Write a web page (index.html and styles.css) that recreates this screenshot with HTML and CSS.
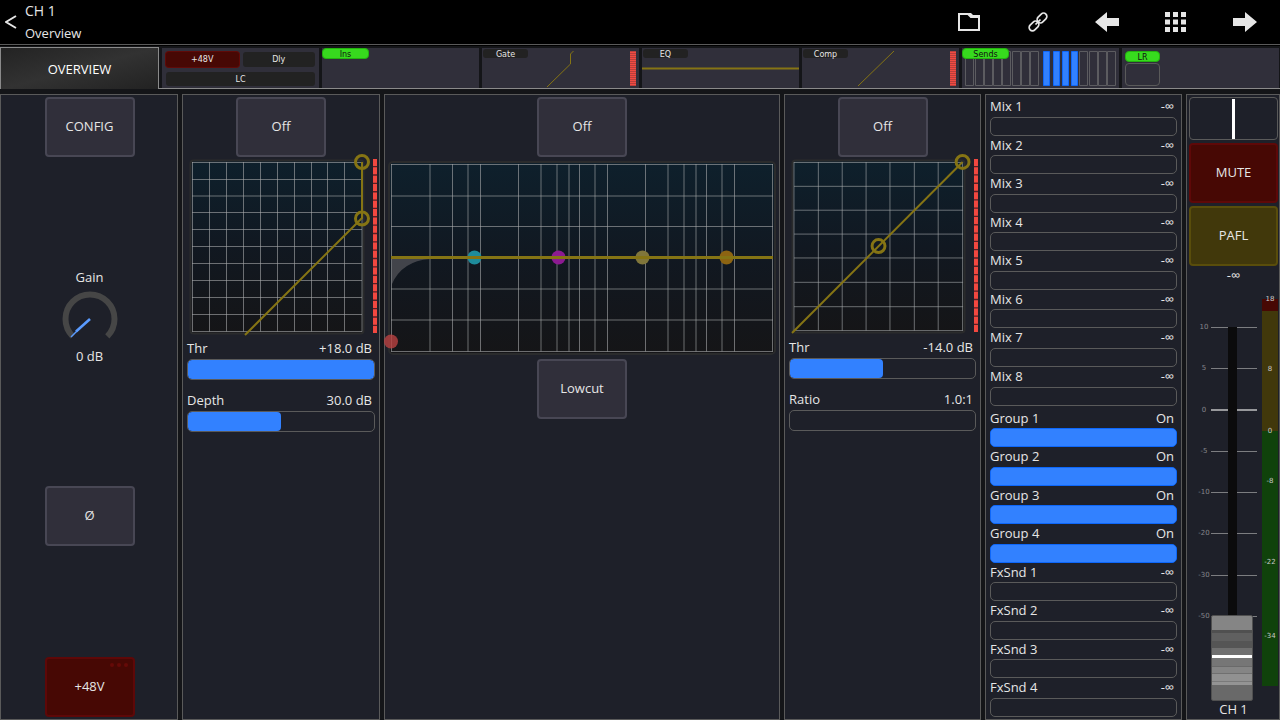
FILE: index.html
```html
<!DOCTYPE html>
<html lang="en">
<head>
	<meta charset="utf-8">
	<meta name="viewport" content="width=device-width, initial-scale=1.0">
	<title>CH 1 Overview</title>
	<link rel="stylesheet" href="styles.css">
</head>
<body>
	<header class="topbar">
		<button class="back" aria-label="Back">
			<svg width="12" height="14" viewBox="0 0 12 14"><path d="M11 1 1 7l10 6" fill="none" stroke="#e6e6e6" stroke-width="2"/></svg>
		</button>
		<h1 class="title">CH 1<small>Overview</small></h1>
		<div class="tools">
			<button aria-label="Library">
				<svg width="24" height="20" viewBox="0 0 24 20"><path d="M2 2h9l3 3h8v13H2z" fill="none" stroke="#e6e6e6" stroke-width="2"/><path d="M11 1h3l2 2h7v3h-9z" fill="#e6e6e6"/></svg>
			</button>
			<button aria-label="Link">
				<svg width="20" height="20" viewBox="0 0 20 20"><g fill="none" stroke="#e6e6e6" stroke-width="1.700"><rect x="8.500" y="2.700" width="11" height="6.600" rx="3.300" transform="rotate(-45 14 6)"/><rect x=".5" y="10.700" width="11" height="6.600" rx="3.300" transform="rotate(-45 6 14)"/><path d="m7.500 12.500 5-5"/></g></svg>
			</button>
			<button aria-label="Previous channel">
				<svg width="24" height="20" viewBox="0 0 24 20"><path d="M0 10 12 0v6h12v8H12v6z" fill="#e6e6e6"/></svg>
			</button>
			<button aria-label="Channels">
				<svg width="22" height="20" viewBox="0 0 22 20"><path d="M0 0h5v5H0zM8 0h5v5H8zM16 0h5v5h-5zM0 7.500h5v5H0zM8 7.500h5v5H8zM16 7.500h5v5h-5zM0 15h5v5H0zM8 15h5v5H8zM16 15h5v5h-5z" fill="#e6e6e6"/></svg>
			</button>
			<button aria-label="Next channel">
				<svg width="24" height="20" viewBox="0 0 24 20"><path d="M24 10 12 0v6H0v8h12v6z" fill="#e6e6e6"/></svg>
			</button>
		</div>
	</header>

	<nav class="tabs">
		<a class="tab current" href="#overview">OVERVIEW</a>
		<a class="tab preamp" href="#preamp">
			<span class="chip red">+48V</span><span class="chip">Dly</span><span class="chip wide">LC</span>
		</a>
		<a class="tab" href="#insert"><span class="tag on">Ins</span></a>
		<a class="tab" href="#gate">
			<span class="tag">Gate</span>
			<svg viewBox="0 0 157 40"><path d="M65 39 88.500 16V6l3-3" fill="none" stroke="#857414"/><path d="M151 3v35" stroke="#f14a42" stroke-width="6"/><path d="M151 3v35" stroke="#b8403c" stroke-width="6" stroke-dasharray="1 1"/></svg>
		</a>
		<a class="tab" href="#eq">
			<span class="tag">EQ</span>
			<svg viewBox="0 0 157 40"><path d="M0 20.500h157" stroke="#857414" stroke-width="2"/></svg>
		</a>
		<a class="tab" href="#comp">
			<span class="tag">Comp</span>
			<svg viewBox="0 0 157 40"><path d="M56 38 92 3" fill="none" stroke="#857414"/><path d="M151 3v35" stroke="#f14a42" stroke-width="6"/><path d="M151 3v35" stroke="#b8403c" stroke-width="6" stroke-dasharray="1 1"/></svg>
		</a>
		<a class="tab" href="#sends">
			<span class="tag on">Sends</span>
			<svg viewBox="0 0 157 40"><path d="M3.500 3.500h8v34h-8zM13.500 3.500h8v34h-8zM22.500 3.500h8v34h-8zM31.500 3.500h8v34h-8zM40.500 3.500h8v34h-8zM50.500 3.500h8v34h-8zM59.500 3.500h8v34h-8zM68.500 3.500h8v34h-8zM117.500 3.500h8v34h-8zM127.500 3.500h8v34h-8zM136.500 3.500h8v34h-8zM145.500 3.500h8v34h-8z" fill="none" stroke="#5c5c60"/><path d="M81.500 3.500h6v34h-6zM91.500 3.500h6v34h-6zM100.500 3.500h6v34h-6zM109.500 3.500h6v34h-6z" fill="#3281ff" stroke="#0d67fa"/></svg>
		</a>
		<a class="tab main-out" href="#lr"><span class="lr">LR</span><span class="lr-box"></span></a>
	</nav>

	<main class="panels">
		<section class="panel preamp-panel">
			<button class="btn">CONFIG</button>
			<div class="gain">
				<span>Gain</span>
				<svg width="56" height="56" viewBox="0 0 56 56" role="img" aria-label="Gain knob"><path d="M10.700 45.300a24.500 24.500 0 1 1 34.600 0" fill="none" stroke="#464646" stroke-width="6"/><path d="M28 28 14 40.500" stroke="#5a9bff" stroke-width="2.600"/><path d="M16 39 9 46" stroke="#5a9bff" stroke-width="1.500"/></svg>
				<span>0 dB</span>
			</div>
			<button class="btn">Ø</button>
			<button class="btn red">+48V<span class="dots"><i></i><i></i><i></i></span></button>
		</section>

		<section class="panel dynamics">
			<button class="btn">Off</button>
			<svg class="graph" viewBox="0 0 188 180">
				<defs>
					<linearGradient id="plot" x1="0" y1="0" x2="0" y2="1"><stop offset="0" stop-color="#0e202c"/><stop offset=".5" stop-color="#111821"/><stop offset="1" stop-color="#151517"/></linearGradient>
				</defs>
				<rect x="3.500" y="3.500" width="173" height="173" rx="3" fill="url(#plot)" stroke="#2a2b2c" stroke-width="2"/>
				<path class="grid" d="M5.500 5v169.500M22.500 5v169.500M39.500 5v169.500M56.500 5v169.500M73.500 5v169.500M90.500 5v169.500M107.500 5v169.500M124.500 5v169.500M140.500 5v169.500M157.500 5v169.500M175 5v169.500M5 5.500h170M5 22.500h170M5 39h170M5 55.500h170M5 72.500h170M5 89.500h170M5 106.500h170M5 123.500h170M5 140.500h170M5 157.500h170M5 174.500h170"/>
				<path class="curve" d="M58 178 175 61V5"/>
				<circle class="handle" cx="175" cy="5" r="6.500"/><circle class="handle" cx="175" cy="61.500" r="6.500"/>
				<path class="leds-off" d="M188 2v174"/><path class="leds" d="M188 2v174"/>
			</svg>
			<div class="param">
				<label for="gate-thr">Thr</label><output for="gate-thr">+18.0 dB</output>
				<input id="gate-thr" type="range" min="-72" max="18" value="18" style="--level: 100%">
			</div>
			<div class="param">
				<label for="gate-depth">Depth</label><output for="gate-depth">30.0 dB</output>
				<input id="gate-depth" type="range" min="0" max="60" value="30" style="--level: 50%">
			</div>
		</section>

		<section class="panel eq">
			<button class="btn">Off</button>
			<svg class="graph" viewBox="0 0 394 202">
				<rect x="4" y="5" width="386" height="192" rx="4" fill="url(#plot)" stroke="#2a2b2c" stroke-width="2"/>
				<path class="grid" d="M6.500 7v187.500M45 7v187.500M67.500 7v187.500M83 7v187.500M95.500 7v187.500M133.500 7v187.500M156 7v187.500M172 7v187.500M184 7v187.500M194.500 7v187.500M210 7v187.500M222.500 7v187.500M260.500 7v187.500M283 7v187.500M299 7v187.500M311 7v187.500M321.500 7v187.500M337 7v187.500M349.500 7v187.500M387.500 7v187.500M6 7.500h382M6 39h382M6 69.500h382M6 132h382M6 163h382M6 194.500h382"/>
				<path d="M7 101v26q10-23 38-25z" fill="#4b4c52" fill-opacity=".85"/>
				<circle cx="89.500" cy="100.500" r="7" fill="#1e8c9c"/>
				<circle cx="173.500" cy="100.500" r="7" fill="#8c1a92"/>
				<circle cx="257.500" cy="100.500" r="7" fill="#80763b"/>
				<circle cx="341.500" cy="100.500" r="7" fill="#8d6412"/>
				<circle cx="6" cy="184.500" r="7" fill="#b94141" fill-opacity=".8"/>
				<path class="curve flat" d="M6 100.500h382"/>
			</svg>
			<button class="btn">Lowcut</button>
		</section>

		<section class="panel dynamics">
			<button class="btn">Off</button>
			<svg class="graph" viewBox="0 0 188 180">
				<rect x="3.500" y="3.500" width="173" height="173" rx="3" fill="url(#plot)" stroke="#2a2b2c" stroke-width="2"/>
				<path class="grid" d="M5 5v169.500M29.500 5v169.500M53.500 5v169.500M77.500 5v169.500M101.500 5v169.500M126 5v169.500M150 5v169.500M174.500 5v169.500M5 5.500h170M5 29.500h170M5 53.500h170M5 77.500h170M5 101.500h170M5 126h170M5 150.500h170M5 174.500h170"/>
				<path class="curve" d="M3 177 174.500 5"/>
				<circle class="handle" cx="174.500" cy="5" r="6.500"/><circle class="handle" cx="90" cy="89.500" r="6.500"/>
				<path class="leds-off" d="M188 2v174"/><path class="leds" d="M188 2v174"/>
			</svg>
			<div class="param">
				<label for="comp-thr">Thr</label><output for="comp-thr">-14.0 dB</output>
				<input id="comp-thr" type="range" min="-46" max="18" value="-14" style="--level: 50%">
			</div>
			<div class="param">
				<label for="comp-ratio">Ratio</label><output for="comp-ratio">1.0:1</output>
				<input id="comp-ratio" type="range" min="1" max="20" value="1" style="--level: 0%">
			</div>
		</section>

		<section class="panel sends">
			<div class="send"><label for="mix1">Mix 1</label><output for="mix1">-∞</output><input id="mix1" type="range" value="0" style="--level: 0%"></div>
			<div class="send"><label for="mix2">Mix 2</label><output for="mix2">-∞</output><input id="mix2" type="range" value="0" style="--level: 0%"></div>
			<div class="send"><label for="mix3">Mix 3</label><output for="mix3">-∞</output><input id="mix3" type="range" value="0" style="--level: 0%"></div>
			<div class="send"><label for="mix4">Mix 4</label><output for="mix4">-∞</output><input id="mix4" type="range" value="0" style="--level: 0%"></div>
			<div class="send"><label for="mix5">Mix 5</label><output for="mix5">-∞</output><input id="mix5" type="range" value="0" style="--level: 0%"></div>
			<div class="send"><label for="mix6">Mix 6</label><output for="mix6">-∞</output><input id="mix6" type="range" value="0" style="--level: 0%"></div>
			<div class="send"><label for="mix7">Mix 7</label><output for="mix7">-∞</output><input id="mix7" type="range" value="0" style="--level: 0%"></div>
			<div class="send"><label for="mix8">Mix 8</label><output for="mix8">-∞</output><input id="mix8" type="range" value="0" style="--level: 0%"></div>
			<div class="send first-group"><label for="grp1">Group 1</label><output for="grp1">On</output><input id="grp1" type="range" value="100" style="--level: 100%"></div>
			<div class="send"><label for="grp2">Group 2</label><output for="grp2">On</output><input id="grp2" type="range" value="100" style="--level: 100%"></div>
			<div class="send"><label for="grp3">Group 3</label><output for="grp3">On</output><input id="grp3" type="range" value="100" style="--level: 100%"></div>
			<div class="send"><label for="grp4">Group 4</label><output for="grp4">On</output><input id="grp4" type="range" value="100" style="--level: 100%"></div>
			<div class="send"><label for="fx1">FxSnd 1</label><output for="fx1">-∞</output><input id="fx1" type="range" value="0" style="--level: 0%"></div>
			<div class="send"><label for="fx2">FxSnd 2</label><output for="fx2">-∞</output><input id="fx2" type="range" value="0" style="--level: 0%"></div>
			<div class="send"><label for="fx3">FxSnd 3</label><output for="fx3">-∞</output><input id="fx3" type="range" value="0" style="--level: 0%"></div>
			<div class="send"><label for="fx4">FxSnd 4</label><output for="fx4">-∞</output><input id="fx4" type="range" value="0" style="--level: 0%"></div>
		</section>

		<section class="panel strip">
			<input class="pan" type="range" min="-50" max="50" value="0" aria-label="Pan">
			<button class="btn red">MUTE</button>
			<button class="btn olive">PAFL</button>
			<output class="level" for="fader">-∞</output>
			<div class="fader-area">
				<div class="scale">
					<span>10</span><span>5</span><span class="unity">0</span><span>-5</span><span>-10</span><span>-20</span><span>-30</span><span>-50</span>
				</div>
				<input class="fader" id="fader" type="range" value="0">
				<div class="meter">
					<span style="top: 0%">18</span>
					<span style="top: 18%">8</span>
					<span style="top: 34%">0</span>
					<span style="top: 47%">-8</span>
					<span style="top: 68%">-22</span>
					<span style="top: 87%">-34</span>
				</div>
			</div>
			<label class="name" for="fader">CH 1</label>
		</section>
	</main>
</body>
</html>
```
FILE: styles.css
```css
* {
	box-sizing: border-box;
}
body {
	margin: 0;
	height: 100vh;
	display: flex;
	flex-direction: column;
	background: #141518;
	color: #e6e6e6;
	font-family: "Open Sans", "Noto Sans", sans-serif;
	font-size: 13px;
	overflow: hidden;
}
button {
	font: inherit;
	color: inherit;
	padding: 0;
	border: 0;
	background: none;
}
svg {
	display: block;
}

/* top bar */
.topbar {
	display: flex;
	height: 45px;
	background: #000;
	border-bottom: 1px solid #5a5a5a;
}
.back {
	width: 25px;
	display: flex;
	align-items: center;
	padding-left: 5px;
}
.title {
	margin: 0;
	flex: 1;
	font-size: 14px;
	font-weight: normal;
	line-height: 22px;
}
.title small {
	display: block;
	font-size: 13px;
}
.tools {
	display: flex;
	padding-right: 1px;
}
.tools button {
	width: 69px;
	display: flex;
	align-items: center;
	justify-content: center;
}

/* channel tabs */
.tabs {
	display: grid;
	grid-template-columns: repeat(8, 1fr);
	grid-template-rows: 100%;
	height: 44px;
	padding-top: 1px;
	border-top: 1px solid #000;
	border-bottom: 1px solid #8a8a8a;
}
.tab {
	position: relative;
	margin: 1px 1px 0 2px;
	background: #302f3a;
	color: #e6e6e6;
	font-family: "DejaVu Sans", sans-serif;
	font-size: 8px;
	text-decoration: none;
}
.tab svg {
	width: 100%;
	height: 40px;
}
.tab.current {
	display: flex;
	align-items: center;
	justify-content: center;
	margin: 0 1px -1px 0;
	border: 1px solid #8a8a8a;
	border-bottom: 0;
	background: linear-gradient(165deg, #232323, #323232 50%, #222);
	color: #fff;
	font-family: "Open Sans", "Noto Sans", sans-serif;
	font-size: 13px;
}
.tag {
	position: absolute;
	top: 1px;
	left: 1px;
	width: 45px;
	height: 9px;
	border-radius: 3px;
	background: #222;
	line-height: 11px;
	text-align: center;
}
.tag.on,
.lr {
	top: 0;
	left: 0;
	width: 47px;
	height: 11px;
	border: 1px solid #23b20f;
	border-radius: 4px;
	background: #37da1e;
	color: #111;
}
.preamp {
	display: grid;
	grid-template-columns: 1fr 1fr;
	grid-template-rows: 15px 14px;
	gap: 5px 4px;
	padding: 4px 4px 2px 4px;
}
.chip {
	border-radius: 3px;
	background: #222;
	line-height: 15px;
	text-align: center;
}
.chip.red {
	background: #470804;
	box-shadow: 0 0 0 1px #600a08;
}
.chip.wide {
	grid-column: 1 / 3;
}
.main-out {
	padding: 3px;
}
.lr {
	display: block;
	width: 35px;
	line-height: 11px;
	text-align: center;
}
.lr-box {
	display: block;
	width: 35px;
	height: 23px;
	margin-top: 1px;
	border: 1px solid #5a5a5a;
	border-radius: 4px;
}

/* panels */
.panels {
	flex: 1;
	min-height: 0;
	display: grid;
	grid-template-columns: 178fr 198fr 396fr 197fr 197fr 94fr;
	gap: 4px;
	padding-top: 5px;
}
.panel {
	min-width: 0;
	display: flex;
	flex-direction: column;
	align-items: center;
	padding: 2px 4px;
	border: 1px solid #5a5a5a;
	background: #1e2029;
}
.btn {
	position: relative;
	flex: none;
	width: 90px;
	height: 60px;
	padding-bottom: 2px;
	border: 2px solid #484754;
	border-radius: 4px;
	background: #302f3a;
}
.btn.red {
	border-color: #5e0808;
	background: #470804;
}
.btn.olive {
	border-color: #594d0b;
	background: #41380b;
}
.preamp-panel {
	justify-content: space-between;
	padding-right: 3px;
}
.gain {
	display: flex;
	flex-direction: column;
	align-items: center;
	padding-bottom: 10px;
	line-height: 18px;
}
.gain svg {
	margin-top: 5px;
}
.dots {
	position: absolute;
	top: 4px;
	right: 5px;
	display: flex;
	gap: 3px;
}
.dots i {
	width: 4px;
	height: 4px;
	border-radius: 2px;
	background: #650a08;
}

/* graphs */
.graph {
	width: 100%;
	overflow: visible;
}
.grid {
	fill: none;
	stroke: #a8aaac;
	stroke-opacity: .6;
}
.curve {
	fill: none;
	stroke: #857414;
	stroke-width: 2;
}
.curve.flat {
	stroke-width: 3;
}
.handle {
	fill: none;
	stroke: #857414;
	stroke-width: 3;
}
.leds,
.leds-off {
	stroke: #f24840;
	stroke-width: 4;
	stroke-dasharray: 7 1.350;
}
.leds-off {
	stroke: #591f24;
	stroke-dasharray: none;
}
.eq {
	padding: 2px 0;
}

/* sliders */
.param,
.send {
	display: grid;
	grid-template-columns: 1fr auto;
	width: 100%;
}
.param {
	grid-template-rows: 22px 21px;
	margin-bottom: 9px;
	line-height: 22px;
}
.param output,
.send output {
	padding-right: 3px;
}
.param input,
.send input {
	grid-column: 1 / 3;
	-webkit-appearance: none;
	appearance: none;
	width: 100%;
	height: 100%;
	margin: 0;
	border: 1px solid #5a5a5a;
	border-radius: 5px;
	background: none;
	overflow: hidden;
}
.param input::-webkit-slider-runnable-track,
.send input::-webkit-slider-runnable-track {
	flex: none;
	width: var(--level);
	height: 100%;
	border-radius: 4px;
	background: #3281ff;
}
.param input::-webkit-slider-thumb,
.send input::-webkit-slider-thumb {
	-webkit-appearance: none;
	width: 0;
	height: 0;
}
.send {
	flex: 1;
	grid-template-rows: 1fr 19px;
	line-height: 19px;
}
.send.first-group {
	margin-top: 3px;
}
.send input[value="100"] {
	border-color: #0d67fa;
	background: #3281ff;
}

/* channel strip */
.strip {
	padding: 2px 1px 2px 2px;
}
.strip .btn {
	width: 100%;
	margin-top: 3px;
}
.pan {
	-webkit-appearance: none;
	appearance: none;
	flex: none;
	width: 100%;
	height: 43px;
	margin: 0;
	border: 1px solid #5a5a5a;
	border-radius: 4px;
	background: none;
}
.pan::-webkit-slider-thumb {
	-webkit-appearance: none;
	width: 3px;
	height: 40px;
	background: #fff;
}
.level {
	line-height: 18px;
}
.fader-area {
	flex: 1;
	min-height: 0;
	width: 100%;
	display: grid;
	grid-template-columns: 1fr 16px;
	grid-template-rows: 100%;
	padding-top: 15px;
}
.scale {
	grid-area: 1 / 1;
	display: flex;
	flex-direction: column;
	justify-content: space-between;
	padding: 24px 0 80px 8px;
	color: #85868b;
	font-family: "DejaVu Sans", sans-serif;
	font-size: 7px;
	line-height: 9px;
}
.scale span {
	display: grid;
	grid-template-columns: 14px 46px;
	align-items: center;
	justify-items: center;
}
.scale span::after {
	content: "";
	width: 46px;
	height: 1px;
	background: #7c7d80;
}
.scale span.unity::after {
	height: 2px;
	background: #97989b;
}
.fader {
	grid-area: 1 / 1;
	-webkit-appearance: none;
	appearance: none;
	writing-mode: vertical-lr;
	direction: rtl;
	justify-self: end;
	width: 42px;
	margin: 28px 9px 0 0;
	background: linear-gradient(90deg, transparent 17px, #0b0b0c 17px 26px, transparent 26px);
}
.fader::-webkit-slider-thumb {
	-webkit-appearance: none;
	width: 42px;
	height: 86px;
	border: 1px solid #505050;
	border-radius: 2px;
	background: linear-gradient(#858585 14px, #505050 14px 17px, #606060 17px 25px, #555 25px 32px, #707070 32px 39px, #fff 39px 42px, #767676 42px 50px, #6a6a6a 50px 51px, #858585 51px 57px, #707070 57px 58px, #919191 58px 65px, #7a7a7a 65px 66px, #949494 66px 69px, #696969 69px);
}
.meter {
	position: relative;
	margin-bottom: 15px;
	background: linear-gradient(#470804 3%, #41380b 3% 34%, #10420b 34%);
	color: #c8c8c8;
	font-family: "DejaVu Sans", sans-serif;
	font-size: 7px;
	line-height: 10px;
	text-align: center;
}
.meter span {
	position: absolute;
	left: 0;
	right: 0;
	margin-top: -5px;
}
.name {
	line-height: 16px;
}
```
